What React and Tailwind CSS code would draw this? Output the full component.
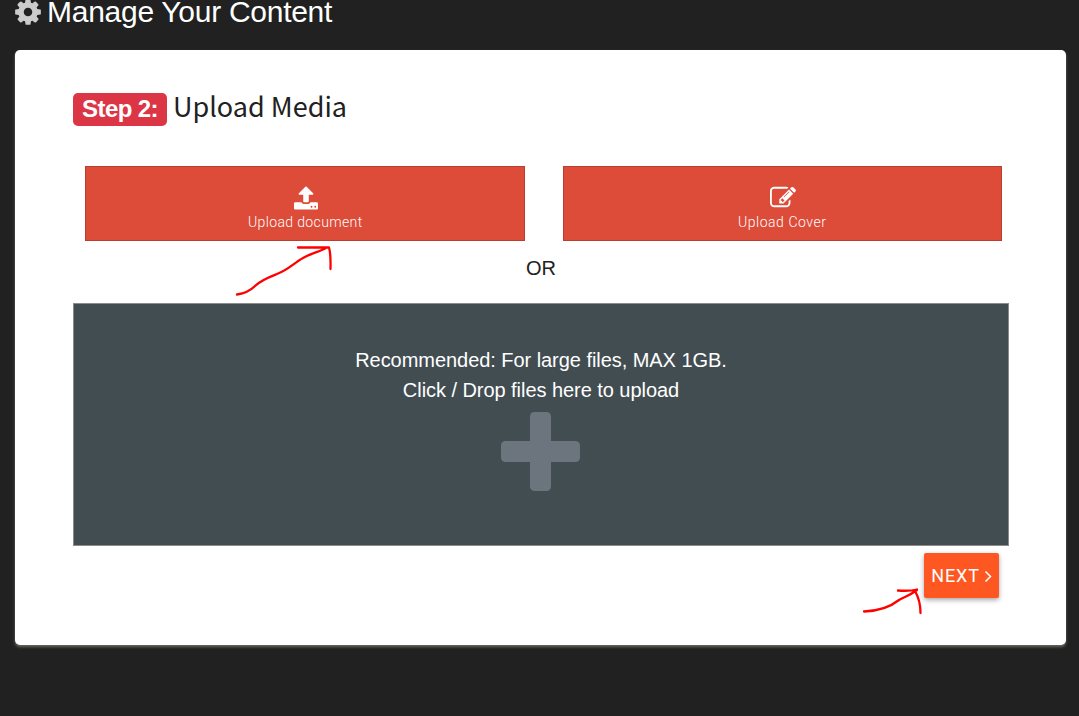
import React from 'react';

const COG =
  'M1152 896q0-106-75-181t-181-75-181 75-75 181 75 181 181 75 181-75 75-181zm512-109v222q0 12-8 23t-20 13l-185 28q-19 54-39 91 35 50 107 138 10 12 10 25t-9 23q-27 37-99 108t-94 71q-12 0-26-9l-138-108q-44 23-91 38-16 136-29 186-7 28-36 28h-222q-14 0-24.5-8.5t-11.5-21.5l-28-184q-49-16-90-37l-141 107q-10 9-25 9-14 0-25-11-126-114-165-168-7-10-7-23 0-12 8-23 15-21 51-66.5t54-70.5q-27-50-41-99l-183-27q-13-2-21-12.5t-8-23.5v-222q0-12 8-23t19-13l186-28q14-46 39-92-40-57-107-138-10-12-10-24 0-10 9-23 26-36 98.5-107.5t94.5-71.5q13 0 26 10l138 107q44-23 91-38 16-136 29-186 7-28 36-28h222q14 0 24.5 8.5t11.5 21.5l28 184q49 16 90 37l142-107q9-9 24-9 13 0 25 10 129 119 165 170 7 8 7 22 0 12-8 23-15 21-51 66.5t-54 70.5q26 50 41 98l183 28q13 2 21 12.5t8 23.5z';
const UPLOAD =
  'M1344 1472q0-26-19-45t-45-19-45 19-19 45 19 45 45 19 45-19 19-45zm256 0q0-26-19-45t-45-19-45 19-19 45 19 45 45 19 45-19 19-45zm128-224v320q0 40-28 68t-68 28h-1472q-40 0-68-28t-28-68v-320q0-40 28-68t68-28h427q21 56 70.5 92t110.5 36h256q61 0 110.5-36t70.5-92h427q40 0 68 28t28 68zm-325-648q-17 40-59 40h-256v448q0 26-19 45t-45 19h-256q-26 0-45-19t-19-45v-448h-256q-42 0-59-40-17-39 14-69l448-448q18-19 45-19t45 19l448 448q31 30 14 69z';
const EDIT =
  'M888 1184l116-116-152-152-116 116v56h96v96h56zm440-720q-16-16-33 1l-350 350q-17 17-1 33t33-1l350-350q17-17 1-33zm80 594v190q0 119-84.5 203.5t-203.5 84.5h-832q-119 0-203.5-84.5t-84.5-203.5v-832q0-119 84.5-203.5t203.5-84.5h832q63 0 117 25 15 7 18 23 3 17-9 29l-49 49q-14 14-32 8-23-6-45-6h-832q-66 0-113 47t-47 113v832q0 66 47 113t113 47h832q66 0 113-47t47-113v-126q0-13 9-22l64-64q15-15 35-7t20 29zm-96-738l288 288-672 672h-288v-288zm444 132l-92 92-288-288 92-92q28-28 68-28t68 28l152 152q28 28 28 68t-28 68z';

function UploadButton({ icon, viewBox, iconClass, label, labelClass }) {
  return (
    <button className="flex h-[75px] flex-1 flex-col items-center border border-[#b93e2e] bg-[#dd4b39] pt-[19px] text-white">
      <svg className={iconClass} viewBox={viewBox} fill="currentColor">
        <path d={icon} />
      </svg>
      <span
        className={`mt-[2px] font-['Roboto',sans-serif] text-[14px] leading-[20px] font-light whitespace-nowrap ${labelClass}`}
      >
        {label}
      </span>
    </button>
  );
}

function Arrow({ className, viewBox, d }) {
  return (
    <svg
      className={className}
      viewBox={viewBox}
      fill="none"
      stroke="#ff0000"
      strokeWidth="2.3"
      strokeLinecap="round"
      strokeLinejoin="round"
    >
      <path d={d} />
    </svg>
  );
}

export default function App() {
  return (
    <div className="relative h-[716px] w-[1079px] overflow-hidden bg-[#212121] pr-[13px] pl-[15px] font-['Liberation_Sans',Arial,sans-serif]">
      <header className="flex h-[50px] items-start">
        <svg className="-mt-[3px] -ml-[2px] h-[30px] w-[30px] shrink-0" viewBox="0 0 1792 1792" fill="#cccccc">
          <path d={COG} />
        </svg>
        <h1 className="ml-[4px] h-[24px] text-[30px] leading-[24px] tracking-[-0.27px] whitespace-nowrap text-white">
          Manage Your Content
        </h1>
      </header>

      <main className="h-[595px] rounded-[5px] bg-white px-[58px] pt-[43px] shadow-[0_2px_3px_#6a6a62]">
        <div className="flex h-[33px]">
          <span className="flex h-[33px] w-[94px] items-center justify-center rounded-[5px] bg-[#dc3545] pb-[1px] text-[24px] font-bold tracking-[-0.6px] whitespace-nowrap text-white">
            Step 2:
          </span>
          <h2 className="-mt-[5px] ml-[6px] font-['Noto_Sans_CJK_SC',sans-serif] text-[27px] leading-[36px] tracking-[0px] whitespace-nowrap text-[#212121]">
            Upload Media
          </h2>
        </div>

        <div className="mt-[40px] mr-[6px] ml-[12px] flex gap-[38px]">
          <UploadButton
            icon={UPLOAD}
            viewBox="64 64 1664 1600"
            iconClass="ml-[2px] h-[24px] w-[24px]"
            label="Upload document"
            labelClass="pl-[1px] tracking-[0.37px]"
          />
          <UploadButton
            icon={EDIT}
            viewBox="0 128 1792 1408"
            iconClass="mb-[2px] ml-[1px] h-[22px] w-[26px]"
            label="Upload Cover"
            labelClass="tracking-[0.55px]"
          />
        </div>

        <p className="mt-[12px] pl-[1px] text-center text-[20px] leading-[30px] text-[#212121]">OR</p>

        <div className="mt-[20px] -mr-[1px] flex h-[243px] flex-col items-center border border-[#8b8b8b] bg-[#424d52] pt-[41px]">
          <p className="text-[20px] leading-[30px] tracking-[-0.05px] text-white">
            Recommended: For large files, MAX 1GB.
          </p>
          <p className="text-[20px] leading-[30px] tracking-[-0.05px] text-white">
            Click / Drop files here to upload
          </p>
          <svg className="mt-[7px] mr-[1px] h-[79px] w-[79px]" viewBox="0 0 79 79" fill="#6c757d">
            <rect x="29" y="0" width="21" height="79" rx="4.5" />
            <rect x="0" y="29" width="79" height="21" rx="4.5" />
          </svg>
        </div>

        <div className="mt-[7px] mr-[9px] flex justify-end">
          <button className="flex h-[45px] w-[75px] items-center rounded-[2px] bg-[#ff5722] pl-[6px] text-white shadow-[0_2px_5px_rgba(0,0,0,0.35)]">
            <span className="w-[51px] font-['Roboto',sans-serif] text-[18px] font-normal tracking-[0.9px]">NEXT</span>
            <svg className="ml-[3px] h-[12px] w-[8px]" viewBox="0 0 8 12" fill="none" stroke="currentColor" strokeWidth="1.5">
              <path d="M1.500 1.500l5 5-5 5" />
            </svg>
          </button>
        </div>
      </main>

      <Arrow
        className="absolute top-[243px] left-[232px] h-[56px] w-[104px]"
        viewBox="232 243 104 56"
        d="M237 294.500C244 293.500 250 291 255 286C261 280 268 277.500 277 274C288 270 294 263 303 258C312 253 319 252 326 248M298 247.500H329C331 254 330.500 262 330.500 269"
      />
      <Arrow
        className="absolute top-[584px] left-[860px] h-[34px] w-[64px]"
        viewBox="860 584 64 34"
        d="M864 611.500C877 611 889 608 899 600C904 597 909 596 917 590M898 590.500C905 591 911 591 917 589.500M915 591C919 598 920.500 604 920.500 613"
      />
    </div>
  );
}
